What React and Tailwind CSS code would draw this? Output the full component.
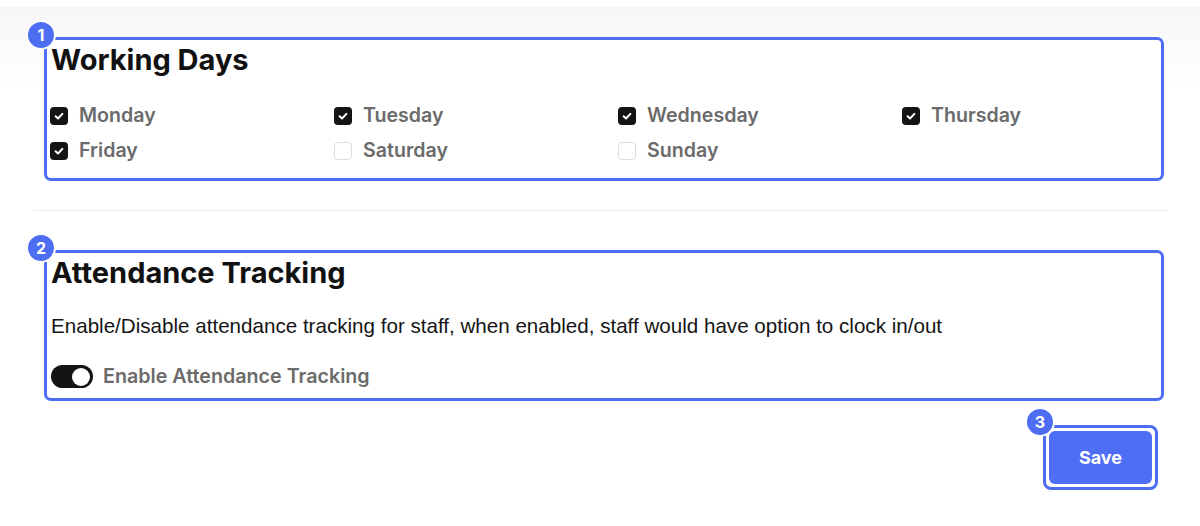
import React from "react";

function Badge({ n, className }) {
  return (
    <div
      className={
        "absolute w-[30px] h-[30px] rounded-full bg-[#4d6ef2] border-2 border-white flex items-center justify-center text-white text-[16px] font-bold leading-none font-['Inter',sans-serif] " +
        className
      }
    >
      {n}
    </div>
  );
}

function Check({ checked, label }) {
  return (
    <div className="flex items-center h-[35px]">
      {checked ? (
        <div className="w-[18px] h-[18px] rounded-[4px] bg-[#141414] flex items-center justify-center">
          <svg width="18" height="18" viewBox="0 0 18 18" fill="none">
            <path d="M5.6 9.3 L8 11.5 L12.4 6.9" stroke="white" strokeWidth="2" strokeLinecap="round" strokeLinejoin="round" />
          </svg>
        </div>
      ) : (
        <div className="w-[18px] h-[18px] rounded-[4px] bg-white border border-[#dcdcdc]" />
      )}
      <span className="ml-[11px] text-[19.6px] font-semibold text-[#6b6b6b] leading-none">{label}</span>
    </div>
  );
}

export default function App() {
  const days = [
    ["Monday", true],
    ["Tuesday", true],
    ["Wednesday", true],
    ["Thursday", true],
    ["Friday", true],
    ["Saturday", false],
    ["Sunday", false],
  ];
  return (
    <div className="w-[1200px] h-[526px] overflow-hidden bg-[linear-gradient(to_bottom,#ffffff_0px,#ffffff_7px,#f7f7f7_7px,#fafafa_40px,#ffffff_90px)] font-['Inter',sans-serif]">
      <div className="pt-[37px] pl-[44px]">
        <div className="relative w-[1120px] h-[144px] border-[3px] border-[#4d6ef2] rounded-[7px] bg-white pl-[4px] pt-[2px]">
          <Badge n="1" className="left-[-21px] top-[-20px]" />
          <h2 className="text-[29px] leading-[35px] font-bold text-[#111]">Working Days</h2>
          <div className="mt-[21px] ml-[-1px] grid grid-cols-[284px_284px_284px_284px]">
            {days.map(([d, c]) => (
              <Check key={d} checked={c} label={d} />
            ))}
          </div>
        </div>

        <div className="mt-[29px] ml-[-11px] w-[1135px] h-px bg-[#ebebeb]" />

        <div className="mt-[39px] relative w-[1120px] h-[151px] border-[3px] border-[#4d6ef2] rounded-[7px] bg-white pl-[4px] pt-[2px]">
          <Badge n="2" className="left-[-21px] top-[-20px]" />
          <h2 className="text-[29px] leading-[35px] font-bold text-[#111]">Attendance Tracking</h2>
          <p className="mt-[22px] font-['Liberation_Sans',Arial,sans-serif] text-[20.6px] leading-[28px] text-[#151515]">
            Enable/Disable attendance tracking for staff, when enabled, staff would have option to clock in/out
          </p>
          <div className="mt-[25px] flex items-center h-[23px]">
            <div className="w-[42px] h-[23px] rounded-full bg-[#141414] flex items-center justify-end pr-[3px]">
              <div className="w-[18px] h-[18px] rounded-full bg-white" />
            </div>
            <span className="ml-[10px] text-[19.7px] font-semibold text-[#6b6b6b] leading-none">Enable Attendance Tracking</span>
          </div>
        </div>

        <div className="mt-[24px] w-[1114px] flex justify-end">
          <div className="relative w-[115px] h-[65px] border-[3px] border-[#4d6ef2] rounded-[8px] p-[3px] bg-white">
            <Badge n="3" className="left-[-21px] top-[-21px]" />
            <button className="w-full h-full rounded-[6px] bg-[#4f6ef6] text-white text-[18px] font-bold">Save</button>
          </div>
        </div>
      </div>
    </div>
  );
}
